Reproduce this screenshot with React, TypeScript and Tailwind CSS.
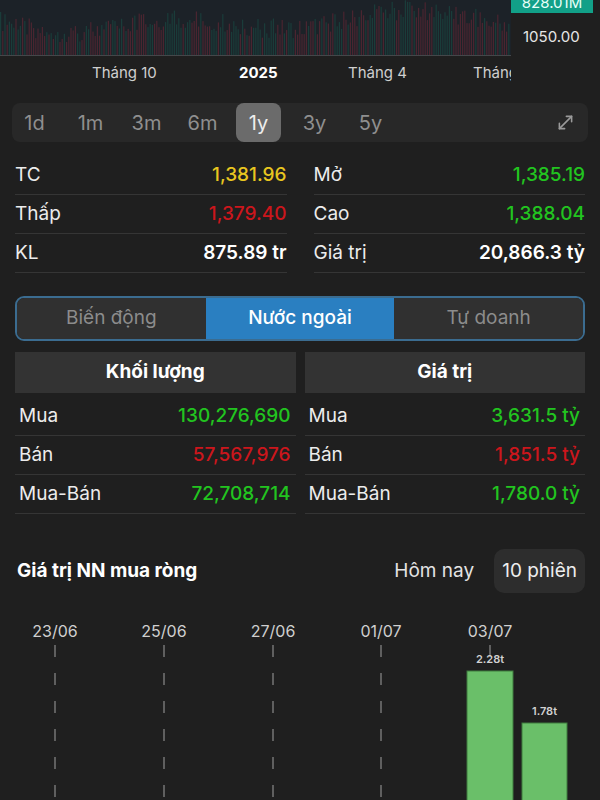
import { MoveDiagonal } from 'lucide-react';

// dense price/volume strip at the very top
const topBars = Array.from({ length: 232 }, (_, i) => {
  const r = Math.abs(Math.sin(i * 12.9898) * 43758.5453) % 1;
  const r2 = Math.abs(Math.sin(i * 78.233) * 12345.678) % 1;
  const wave = Math.sin(i / 17) * 7 + Math.sin(i / 41) * 5;
  const top = Math.max(0, 12 + r * 20 + wave);
  return { x: i * 2.2, top, red: r2 > 0.48 };
});

const stats = [
  { l: 'TC', v: '1,381.96', c: 'text-[#e8c61f]', r: 'Mở', rv: '1,385.19', rc: 'text-[#22c41f]' },
  { l: 'Thấp', v: '1,379.40', c: 'text-[#cc161c]', r: 'Cao', rv: '1,388.04', rc: 'text-[#22c41f]' },
  { l: 'KL', v: '875.89 tr', c: 'text-white font-semibold', r: 'Giá trị', rv: '20,866.3 tỷ', rc: 'text-white font-semibold' },
];

const volRows = [
  { l: 'Mua', v: '130,276,690', c: 'text-[#22c41f]' },
  { l: 'Bán', v: '57,567,976', c: 'text-[#cc161c]' },
  { l: 'Mua-Bán', v: '72,708,714', c: 'text-[#22c41f]' },
];

const valRows = [
  { l: 'Mua', v: '3,631.5 tỷ', c: 'text-[#22c41f]' },
  { l: 'Bán', v: '1,851.5 tỷ', c: 'text-[#cc161c]' },
  { l: 'Mua-Bán', v: '1,780.0 tỷ', c: 'text-[#22c41f]' },
];

const periods = ['1d', '1m', '3m', '6m', '1y', '3y', '5y'];
const dates = [
  { d: '23/06', x: 55 },
  { d: '25/06', x: 164 },
  { d: '27/06', x: 273 },
  { d: '01/07', x: 381 },
  { d: '03/07', x: 490 },
];

function FlowTable({ title, rows }: { title: string; rows: typeof volRows }) {
  return (
    <div className="flex flex-col">
      <div className="h-[41px] bg-[#333333] flex items-center justify-center text-[19px] font-bold text-white">
        {title}
      </div>
      <div className="mt-[4px]">
        {rows.map((r) => (
          <div
            key={r.l}
            className="h-[39px] border-b border-[#353535] flex items-center justify-between pl-[4px] pr-[5px] text-[19px]"
          >
            <span className="text-[#ececec]">{r.l}</span>
            <span className={`font-medium ${r.c}`}>{r.v}</span>
          </div>
        ))}
      </div>
    </div>
  );
}

export default function App() {
  return (
    <div className="w-[600px] h-[800px] overflow-hidden bg-[#1f1f1f] font-['Inter',sans-serif] text-white">
      {/* top chart strip */}
      <div className="flex h-[56px]">
        <div className="w-[511px] h-full border-b border-[#44474a]">
          <svg width="511" height="55" className="block">
            <rect width="511" height="55" fill="#1c2228" />
            {topBars.map((b, i) => (
              <rect
                key={i}
                x={b.x}
                y={b.top}
                width="1.2"
                height={55 - b.top}
                fill={b.red ? '#4a2530' : '#1a3c3a'}
              />
            ))}
          </svg>
        </div>
        <div className="flex-1 flex flex-col">
          <div className="w-[82px] h-[13px] bg-[#12a088] overflow-hidden flex justify-center">
            <span className="text-[15px] leading-[16px] -mt-[5px] text-[#e8fff9]">828.01M</span>
          </div>
          <div className="mt-[15px] pl-[12px] text-[15px] leading-[18px] text-[#e6e6e6]">1050.00</div>
        </div>
      </div>

      {/* x axis labels */}
      <div className="relative h-[47px] text-[15px] leading-[18px] text-[#cfcfcf]">
        <span className="absolute top-[8px] left-[92px]">Tháng 10</span>
        <span className="absolute top-[8px] left-[239px] font-bold text-white">2025</span>
        <span className="absolute top-[8px] left-[348px]">Tháng 4</span>
        <span className="absolute top-[8px] left-[473px] w-[38px] overflow-hidden whitespace-nowrap">Tháng</span>
      </div>

      {/* period selector */}
      <div className="mx-[12px] h-[39px] rounded-[8px] bg-[#282828] flex items-center gap-[11px]">
        {periods.map((p) => (
          <div
            key={p}
            className={`w-[45px] h-full flex items-center justify-center text-[20px] rounded-[8px] ${
              p === '1y' ? 'bg-[#6b6b6b] text-[#ededed]' : 'text-[#8f8f8f]'
            }`}
          >
            {p}
          </div>
        ))}
        <div className="ml-auto mr-[12px] text-[#9a9a9a]">
          <MoveDiagonal size={21} strokeWidth={1.8} />
        </div>
      </div>

      {/* stats */}
      <div className="mt-[14px] px-[15px] grid grid-cols-2 gap-x-[27px] text-[19px]">
        {stats.map((s) => (
          <div key={s.l} className="contents">
            <div className="h-[39px] border-b border-[#353535] flex items-center justify-between">
              <span className="text-[#ececec]">{s.l}</span>
              <span className={`font-medium ${s.c}`}>{s.v}</span>
            </div>
            <div className="h-[39px] border-b border-[#353535] flex items-center justify-between">
              <span className="text-[#ececec]">{s.r}</span>
              <span className={`font-medium ${s.rc}`}>{s.rv}</span>
            </div>
          </div>
        ))}
      </div>

      {/* tabs */}
      <div className="mt-[23px] mx-[15px] h-[45px] rounded-[9px] border-2 border-[#3b6c90] overflow-hidden grid grid-cols-3 text-[19px]">
        <div className="bg-[#303030] flex items-center justify-center text-[#8c8c8c] rounded-l-[7px]">Biến động</div>
        <div className="bg-[#2a7fc1] flex items-center justify-center text-white font-medium">Nước ngoài</div>
        <div className="bg-[#303030] flex items-center justify-center text-[#8c8c8c]">Tự doanh</div>
      </div>

      {/* foreign flow tables */}
      <div className="mt-[11px] px-[15px] grid grid-cols-2 gap-x-[9px]">
        <FlowTable title="Khối lượng" rows={volRows} />
        <FlowTable title="Giá trị" rows={valRows} />
      </div>

      {/* net buy header */}
      <div className="mt-[35px] pl-[17px] pr-[15px] h-[44px] flex items-center">
        <span className="text-[19px] font-bold text-white">Giá trị NN mua ròng</span>
        <div className="ml-auto flex items-center h-full text-[19px]">
          <div className="px-[20px] text-[#e4e4e4]">Hôm nay</div>
          <div className="h-full px-[8px] rounded-[10px] bg-[#2d2d2d] flex items-center text-[#ededed]">10 phiên</div>
        </div>
      </div>

      {/* net buy chart */}
      <svg width="600" height="185" className="block mt-[22px]">
        {dates.map((d) => (
          <g key={d.d}>
            <text x={d.x} y="22" textAnchor="middle" fontSize="16" fill="#cfcfcf" fontFamily="Inter, sans-serif">
              {d.d}
            </text>
            <line x1={d.x} y1="30" x2={d.x} y2="185" stroke="#8a8a8a" strokeWidth="1.2" strokeDasharray="12 16" />
          </g>
        ))}
        <rect x="467" y="56" width="46" height="140" fill="#6abf69" stroke="#3f7d3e" strokeWidth="1" />
        <rect x="522" y="108" width="45" height="90" fill="#6abf69" stroke="#3f7d3e" strokeWidth="1" />
        <text x="490" y="48" textAnchor="middle" fontSize="11" fontWeight="600" fill="#d2d2d2" fontFamily="Inter, sans-serif">
          2.28t
        </text>
        <text x="544.5" y="100" textAnchor="middle" fontSize="11" fontWeight="600" fill="#d2d2d2" fontFamily="Inter, sans-serif">
          1.78t
        </text>
      </svg>
    </div>
  );
}
